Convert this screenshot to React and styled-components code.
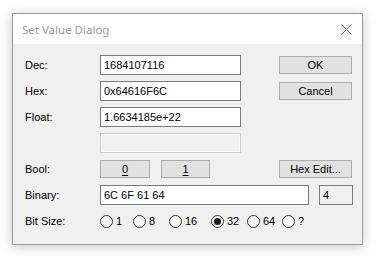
import React from "react";
import styled, { createGlobalStyle } from "styled-components";

const Global = createGlobalStyle`
  html, body {
    margin: 0;
    background: #ffffff;
  }
  body {
    font-family: "Liberation Sans", Arial, sans-serif;
    font-size: 11px;
    color: #000;
  }
`;

const Page = styled.div`
  width: 376px;
  height: 256px;
  padding: 13px 0 0 12px;
  box-sizing: border-box;
`;

const Window = styled.div`
  width: 351px;
  height: 232px;
  box-sizing: border-box;
  border: 1px solid #9a9a9a;
  background: #f0f0f0;
  box-shadow: 0 2px 12px rgba(0, 0, 0, 0.22);
  display: flex;
  flex-direction: column;
`;

const TitleBar = styled.div`
  height: 30px;
  flex: none;
  background: #ffffff;
  display: flex;
  align-items: center;
  justify-content: space-between;
  padding: 0 10px 0 9px;
`;

const Title = styled.span`
  font-family: "Noto Sans", "Open Sans", sans-serif;
  font-size: 11.5px;
  color: #9b9b9b;
  padding-top: 1px;
`;

const Body = styled.div`
  flex: 1;
  padding: 11px 10px 0 12px;
  display: flex;
  flex-direction: column;
  gap: 6px;
`;

const Row = styled.div`
  height: 20px;
  display: flex;
  align-items: center;
`;

const Label = styled.span`
  width: 75px;
  flex: none;
`;

const Field = styled.div`
  width: ${(p) => p.$w || 141}px;
  height: 20px;
  box-sizing: border-box;
  flex: none;
  border: 1px solid ${(p) => (p.$disabled ? "#cccccc" : "#7a7a7a")};
  background: ${(p) => (p.$grey || p.$disabled ? "#f0f0f0" : "#ffffff")};
  box-shadow: ${(p) => (p.$disabled ? "inset 0 0 0 1px #fbfbfb" : "none")};
  padding: 0 3px;
  display: flex;
  align-items: center;
  margin-left: ${(p) => p.$ml || 0}px;
`;

const Button = styled.div`
  width: ${(p) => p.$w || 73}px;
  height: 18px;
  box-sizing: border-box;
  flex: none;
  border: 1px solid #adadad;
  background: #e1e1e1;
  display: flex;
  align-items: center;
  justify-content: center;
  margin-left: ${(p) => (p.$right ? "auto" : `${p.$ml || 0}px`)};
  u {
    text-decoration: underline;
    text-underline-offset: 2px;
  }
`;

const Radio = styled.div`
  width: ${(p) => p.$w}px;
  flex: none;
  display: flex;
  align-items: center;
  gap: 3px;
`;

const Circle = styled.span`
  width: 13px;
  height: 13px;
  box-sizing: border-box;
  border-radius: 50%;
  border: 1px solid #333333;
  background: #ffffff;
  display: flex;
  align-items: center;
  justify-content: center;
  &::after {
    content: "";
    width: 7px;
    height: 7px;
    border-radius: 50%;
    background: ${(p) => (p.$on ? "#1a1a1a" : "transparent")};
  }
`;

const Close = () => (
  <svg width="11" height="11" viewBox="0 0 11 11">
    <path d="M0.5 0.5 L10.5 10.5 M10.5 0.5 L0.5 10.5" stroke="#707070" strokeWidth="1" fill="none" />
  </svg>
);

const sizes = [
  { v: "1", w: 33 },
  { v: "8", w: 36 },
  { v: "16", w: 42 },
  { v: "32", w: 36, on: true },
  { v: "64", w: 35 },
  { v: "?", w: 30 },
];

export default function App() {
  return (
    <Page>
      <Global />
      <Window>
        <TitleBar>
          <Title>Set Value Dialog</Title>
          <Close />
        </TitleBar>
        <Body>
          <Row>
            <Label>Dec:</Label>
            <Field>1684107116</Field>
            <Button $right>OK</Button>
          </Row>
          <Row>
            <Label>Hex:</Label>
            <Field>0x64616F6C</Field>
            <Button $right>Cancel</Button>
          </Row>
          <Row>
            <Label>Float:</Label>
            <Field>1.6634185e+22</Field>
          </Row>
          <Row>
            <Label />
            <Field $disabled />
          </Row>
          <Row>
            <Label>Bool:</Label>
            <Button $w={50}><u>0</u></Button>
            <Button $w={49} $ml={11}><u>1</u></Button>
            <Button $right>Hex Edit...</Button>
          </Row>
          <Row>
            <Label>Binary:</Label>
            <Field $w={209}>6C 6F 61 64</Field>
            <Field $w={34} $ml={10} $grey>4</Field>
          </Row>
          <Row>
            <Label>Bit Size:</Label>
            {sizes.map((s) => (
              <Radio key={s.v} $w={s.w}>
                <Circle $on={s.on} />
                <span>{s.v}</span>
              </Radio>
            ))}
          </Row>
        </Body>
      </Window>
    </Page>
  );
}
